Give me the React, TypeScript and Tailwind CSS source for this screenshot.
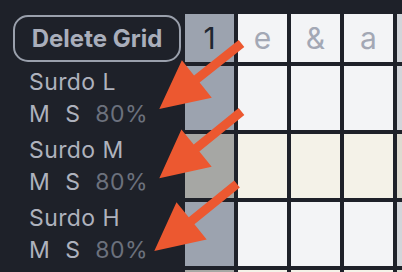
import React from "react";

function arrowPoints(tx: number, ty: number, ex: number, ey: number, H = 48, W = 24, s = 4.5) {
  const dx = ex - tx;
  const dy = ey - ty;
  const L = Math.hypot(dx, dy);
  const ux = dx / L;
  const uy = dy / L;
  const px = -uy;
  const py = ux;
  const pt = (a: number, b: number) => `${(tx + a * ux + b * px).toFixed(2)},${(ty + a * uy + b * py).toFixed(2)}`;
  return [pt(0, 0), pt(H, W), pt(H, s), pt(L, s), pt(L, -s), pt(H, -s), pt(H, -W)].join(" ");
}

type RowKind = "white" | "cream";

function TrackLabel({ name }: { name: string }) {
  return (
    <div className="flex flex-col pl-[16px] text-[23px] tracking-[0.4px] leading-none">
      <div className="h-[32px] flex items-center text-[#aeb2bd]">{name}</div>
      <div className="h-[32px] flex items-center gap-[15px]">
        <span className="text-[#aeb2bd]">M</span>
        <span className="text-[#aeb2bd]">S</span>
        <span className="text-[#6c717d]">80%</span>
      </div>
    </div>
  );
}

function RowCells({ kind }: { kind: RowKind }) {
  const first = kind === "cream" ? "bg-[#a6a7a4]" : "bg-[#9ca3af]";
  const cell = kind === "cream" ? "bg-[#f4f2e8]" : "bg-[#f3f4f6]";
  const last = kind === "cream" ? "bg-[#dddbd1]" : "bg-[#d2d5da]";
  return (
    <>
      <div className={first} />
      <div className={cell} />
      <div className={cell} />
      <div className={cell} />
      <div className={last} />
    </>
  );
}

export default function App() {
  return (
    <div className="relative w-[402px] h-[272px] overflow-hidden bg-[#1e2129] font-['Inter','Noto_Sans',sans-serif]">
      <div className="grid grid-cols-[168px_49px_49px_49px_49px_49px] grid-rows-[48px_64px_64px_64px_64px] gap-[4px] pl-[13px] pt-[14px]">
        <div className="pt-[1px]">
          <div className="h-[47px] rounded-[15px] border-2 border-[#9aa0ac] flex items-center justify-center text-[24px] font-bold text-[#a9aebb] leading-none">
            Delete Grid
          </div>
        </div>
        <div className="bg-[#9ca3af] flex items-center justify-center text-[30px] text-[#1f2630] leading-none">1</div>
        <div className="bg-[#f3f4f6] flex items-center justify-center text-[30px] text-[#a3a8b5] leading-none">e</div>
        <div className="bg-[#f3f4f6] flex items-center justify-center text-[30px] text-[#a3a8b5] leading-none">&amp;</div>
        <div className="bg-[#f3f4f6] flex items-center justify-center text-[30px] text-[#a3a8b5] leading-none">a</div>
        <div className="bg-[#d2d5da]" />

        <TrackLabel name="Surdo L" />
        <RowCells kind="white" />

        <TrackLabel name="Surdo M" />
        <RowCells kind="cream" />

        <TrackLabel name="Surdo H" />
        <RowCells kind="white" />

        <div />
        <RowCells kind="cream" />
      </div>

      <svg className="absolute inset-0 pointer-events-none" width="402" height="272" viewBox="0 0 402 272">
        <polygon points={arrowPoints(159.3, 109, 241.5, 43.5)} fill="#ec5830" />
        <polygon points={arrowPoints(159.3, 178.3, 241.5, 111.5)} fill="#ec5830" />
        <polygon points={arrowPoints(154.3, 251, 237, 184)} fill="#ec5830" />
      </svg>
    </div>
  );
}
